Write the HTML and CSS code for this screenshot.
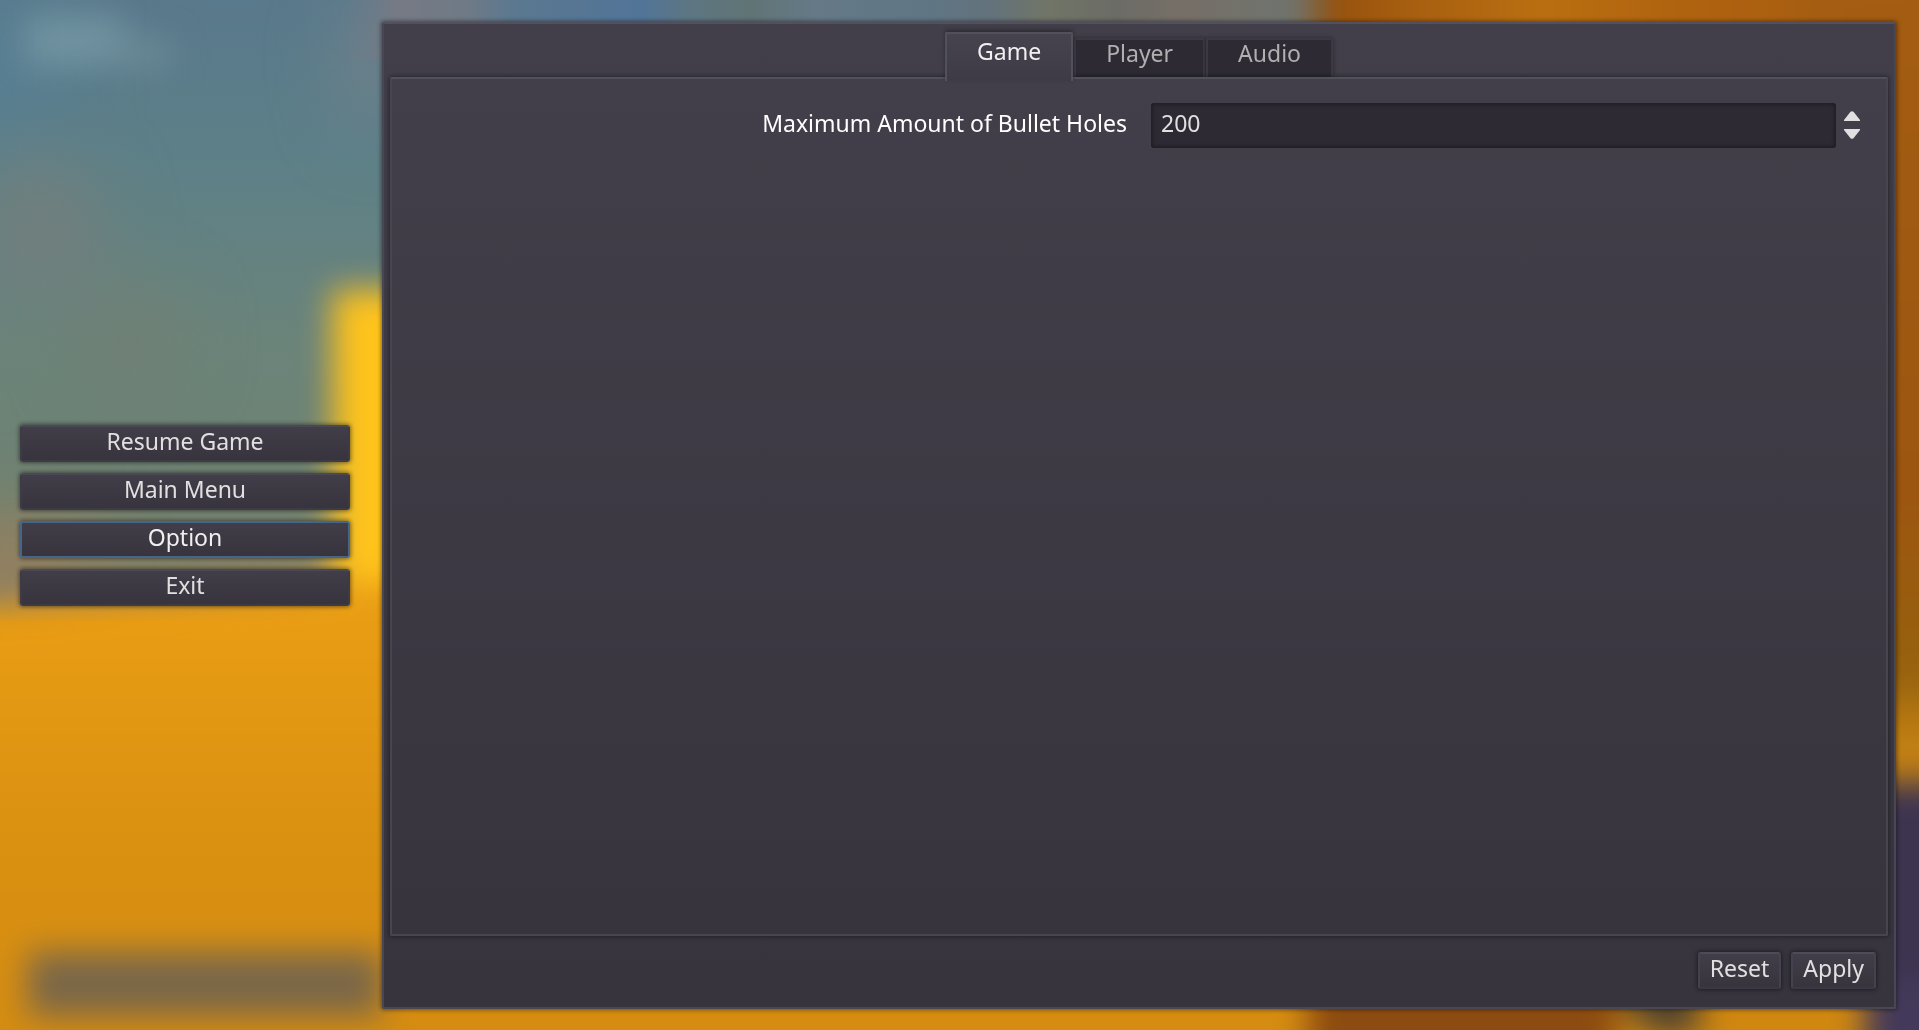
FILE: index.html
```html
<!DOCTYPE html>
<html lang="en">
<head>
  <meta charset="utf-8">
  <meta name="viewport" content="width=device-width, initial-scale=1">
  <title>Options</title>
  <link rel="stylesheet" href="styles.css">
</head>
<body>
  <svg class="scene" viewBox="0 0 1919 1030" preserveAspectRatio="none" aria-hidden="true">
    <defs>
      <filter id="soft" x="-50%" y="-50%" width="200%" height="200%" color-interpolation-filters="sRGB"><feGaussianBlur stdDeviation="16"/></filter>
      <filter id="softer" x="-100%" y="-100%" width="300%" height="300%" color-interpolation-filters="sRGB"><feGaussianBlur stdDeviation="36"/></filter>
      <linearGradient id="sky" x1="0" y1="0" x2="0" y2="1">
        <stop offset="0" stop-color="#59798c"/>
        <stop offset=".25" stop-color="#5d8088"/>
        <stop offset=".55" stop-color="#6b847a"/>
        <stop offset=".8" stop-color="#6f8272"/>
        <stop offset="1" stop-color="#928060"/>
      </linearGradient>
      <linearGradient id="floor" x1="0" y1="0" x2="0" y2="1">
        <stop offset="0" stop-color="#ea9e15"/>
        <stop offset=".1" stop-color="#e89c14"/>
        <stop offset=".5" stop-color="#da9111"/>
        <stop offset="1" stop-color="#d38a11"/>
      </linearGradient>
      <linearGradient id="strip" gradientUnits="userSpaceOnUse" x1="340" y1="0" x2="1310" y2="0">
        <stop offset="0" stop-color="#6c7a88" stop-opacity="0"/>
        <stop offset=".06" stop-color="#777a85"/>
        <stop offset=".13" stop-color="#6f7a86"/>
        <stop offset=".18" stop-color="#5b7890"/>
        <stop offset=".31" stop-color="#527498"/>
        <stop offset=".36" stop-color="#5d7682"/>
        <stop offset=".42" stop-color="#607475"/>
        <stop offset=".49" stop-color="#657987"/>
        <stop offset=".6" stop-color="#607685"/>
        <stop offset=".67" stop-color="#63727c"/>
        <stop offset=".73" stop-color="#707566"/>
        <stop offset=".8" stop-color="#6c6c66"/>
        <stop offset=".87" stop-color="#766f67"/>
        <stop offset="1" stop-color="#6e7570"/>
      </linearGradient>
      <linearGradient id="rust" gradientUnits="userSpaceOnUse" x1="1320" y1="0" x2="1919" y2="0">
        <stop offset="0" stop-color="#95500d"/>
        <stop offset=".17" stop-color="#a96010"/>
        <stop offset=".37" stop-color="#ba6f11"/>
        <stop offset=".6" stop-color="#b0630f"/>
        <stop offset="1" stop-color="#a45c12"/>
      </linearGradient>
      <linearGradient id="side" x1="0" y1="0" x2="0" y2="1">
        <stop offset="0" stop-color="#a45d12"/>
        <stop offset=".65" stop-color="#9c5610"/>
        <stop offset=".87" stop-color="#96620e"/>
        <stop offset=".95" stop-color="#c38013"/>
        <stop offset="1" stop-color="#c38013"/>
      </linearGradient>
    </defs>
    <rect width="1919" height="620" fill="url(#sky)"/>
    <g filter="url(#softer)">
      <rect x="-80" y="0" width="140" height="130" fill="#587f92"/>
      <ellipse cx="40" cy="230" rx="60" ry="75" fill="#727f7d"/>
      <ellipse cx="375" cy="60" rx="28" ry="70" fill="#75828a"/>
      <ellipse cx="130" cy="340" rx="50" ry="50" fill="#717f74"/>
      <rect x="-60" y="520" width="150" height="100" fill="#928060"/>
    </g>
    <g filter="url(#soft)">
      <rect x="25" y="15" width="100" height="52" fill="#7092a0"/>
      <rect x="110" y="40" width="60" height="28" fill="#6b8b96"/>
    </g>
    <rect x="340" y="0" width="980" height="60" fill="url(#strip)"/>
    <g filter="url(#soft)">
      <rect x="333" y="290" width="200" height="340" fill="#ffc31c"/>
      <path d="M-80 612L380 582H1980V1100H-80Z" fill="url(#floor)"/>
      <rect x="1314" y="-60" width="700" height="200" fill="url(#rust)"/>
      <rect x="1800" y="-20" width="200" height="800" fill="url(#side)"/>
      <rect x="1840" y="782" width="160" height="320" fill="#3d3450"/>
      <rect x="28" y="952" width="354" height="64" fill="#7a6748"/>
      <rect x="1308" y="980" width="310" height="100" fill="#8c4b10"/>
      <path d="M1605 980H1700V1036H1650Z" fill="#50432f"/>
      <rect x="1700" y="980" width="165" height="100" fill="#d08710"/>
      <rect x="1868" y="980" width="100" height="100" fill="#43395a"/>
    </g>
  </svg>

  <main class="screen">
    <nav class="menu" aria-label="Pause menu">
      <button class="button" type="button">Resume Game</button>
      <button class="button" type="button">Main Menu</button>
      <button class="button button-focused" type="button">Option</button>
      <button class="button" type="button">Exit</button>
    </nav>

    <section class="window">
      <div class="tabs" role="tablist">
        <button class="tab tab-active" type="button" role="tab" aria-selected="true">Game</button>
        <button class="tab" type="button" role="tab" aria-selected="false">Player</button>
        <button class="tab" type="button" role="tab" aria-selected="false">Audio</button>
      </div>
      <div class="page" role="tabpanel">
        <div class="row">
          <label class="label" for="holes">Maximum Amount of Bullet Holes</label>
          <div class="spin">
            <input class="field" id="holes" type="number" value="200">
            <div class="arrows">
              <button class="arrow" type="button" aria-label="Increase">
                <svg class="arrow-icon" viewBox="0 0 16 10"><path d="M6.500 0.800Q8-.5 9.500 .8L16 9V10H0V9Z" fill="#e0e0e0"/></svg>
              </button>
              <button class="arrow" type="button" aria-label="Decrease">
                <svg class="arrow-icon" viewBox="0 0 16 10"><path d="M6.500 9.200Q8 10.500 9.500 9.200L16 1V0H0V1Z" fill="#e0e0e0"/></svg>
              </button>
            </div>
          </div>
        </div>
      </div>
      <footer class="actions">
        <button class="button" type="button">Reset</button>
        <button class="button" type="button">Apply</button>
      </footer>
    </section>
  </main>
</body>
</html>
```
FILE: styles.css
```css
* {
  box-sizing: border-box;
}

body {
  margin: 0;
  background: #d38a11;
  color: #e0e0e0;
  font: 23px/32px "Noto Sans", "Open Sans", sans-serif;
}

button,
input {
  margin: 0;
  border: 0;
  color: inherit;
  font: inherit;
}

.scene {
  position: fixed;
  inset: 0;
  z-index: -1;
  width: 100%;
  height: 100%;
}

.screen {
  display: flex;
  gap: 32px;
  min-height: 100vh;
  padding: 22px 23px 21px 20px;
}

.menu {
  display: flex;
  flex: 0 0 330px;
  flex-direction: column;
  justify-content: center;
  gap: 11px;
  padding-bottom: 1px;
}

.button {
  height: 37px;
  padding: 0 10px 4px;
  border: 2px solid #45424e;
  border-top-color: #4e4b59;
  border-bottom-color: #3b3843;
  border-radius: 3px;
  background: linear-gradient(#413e49, #37343e);
  box-shadow: 0 0 4px 1px rgba(0, 0, 0, 0.45);
  line-height: 29px;
}

.menu .button {
  border-color: #3e3b47;
  border-top-color: #4b4856;
}

.menu .button-focused {
  border-color: #45658a;
  color: #f0f0f0;
}

.window {
  display: flex;
  flex: 1;
  flex-direction: column;
  min-width: 0;
  padding: 8px 6px 18px;
  border: 2px solid #4a4754;
  border-top-color: #53505e;
  border-radius: 2px;
  background: linear-gradient(#423f4a, #37343e);
  box-shadow: 0 0 4px 1px rgba(0, 0, 0, 0.45);
}

.tabs {
  display: flex;
  align-items: flex-end;
  justify-content: center;
  gap: 1px;
  height: 45px;
}

.tab {
  height: 39px;
  padding: 0 30px 10px;
  border: 2px solid #3c3944;
  border-bottom: 0;
  border-radius: 2px 2px 0 0;
  background: #2d2a33;
  box-shadow: 0 0 4px rgba(0, 0, 0, 0.4);
  color: #b0b0b0;
  line-height: 27px;
}

.tab-active {
  position: relative;
  z-index: 1;
  height: 49px;
  margin-bottom: -4px;
  padding-bottom: 12px;
  border-color: #53505e;
  background: linear-gradient(#46434f, #3e3b46);
  box-shadow: 0 -2px 4px rgba(0, 0, 0, 0.35);
  color: #f0f0f0;
}

.page {
  flex: 1;
  padding: 24px 22px;
  border: 2px solid #484551;
  border-top-color: #53505e;
  border-radius: 2px;
  background: linear-gradient(#423f4a, #37343e);
  box-shadow: 0 0 4px 1px rgba(0, 0, 0, 0.4);
}

.row {
  display: grid;
  grid-template-columns: 1fr 1fr;
  align-items: center;
  gap: 24px;
}

.label {
  padding-bottom: 6px;
  color: #fff;
  text-align: right;
}

.spin {
  display: flex;
  align-items: center;
  gap: 8px;
  padding-right: 4px;
}

.field {
  flex: 1;
  min-width: 0;
  height: 45px;
  padding: 0 10px 6px;
  border-radius: 3px;
  background: #2d2a33;
  box-shadow: inset 0 0 4px 1px rgba(0, 0, 0, 0.4);
  appearance: textfield;
}

.field::-webkit-inner-spin-button {
  display: none;
}

.arrows {
  display: grid;
  gap: 8px;
  padding-bottom: 2px;
}

.arrow {
  width: 16px;
  height: 10px;
  padding: 0;
  background: none;
}

.arrow-icon {
  display: block;
  width: 16px;
  height: 10px;
}

.actions {
  display: flex;
  justify-content: flex-end;
  gap: 10px;
  padding: 16px 12px 0;
}
```
